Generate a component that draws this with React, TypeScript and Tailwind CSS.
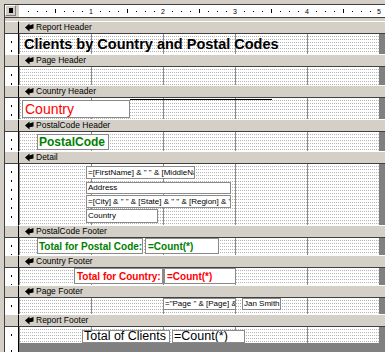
import React from "react";

const GRID =
  "relative w-[360px] shrink-0 bg-[image:linear-gradient(to_right,#8c8c8c_1px,transparent_1px),linear-gradient(to_right,#ffffff_1px,transparent_1px),linear-gradient(to_bottom,#ffffff_2px,#b4b4b4_2px)] bg-[length:72px_100%,2px_3px,2px_3px]";

const LEFT_TICKS =
  "w-[14px] shrink-0 border-r border-black bg-white bg-[image:linear-gradient(to_bottom,transparent_7px,#000000_7px)] bg-[length:1px_9px] bg-[position:6px_0px] bg-repeat-y";

const BOX =
  "absolute bg-white border border-[#8a8a8a] overflow-hidden whitespace-nowrap flex items-center";

function SectionIcon() {
  return (
    <svg width="9" height="9" viewBox="0 0 9 9" className="shrink-0">
      <polygon points="0,4.5 4.5,0.5 4.5,2.5 8.5,1 8.5,5.5 4.5,6.2 4.5,8.5" fill="#000" />
    </svg>
  );
}

function Band({ label }: { label: string }) {
  return (
    <div className="flex h-[13px] shrink-0">
      <div className="w-[14px] shrink-0 border-r border-black bg-[#d4d0c8] border-t border-t-white border-b border-b-[#404040]" />
      <div className="flex-1 bg-[#d4d0c8] border-t border-t-white border-b border-b-[#404040] flex items-center pl-[6px] gap-[2px]">
        <SectionIcon />
        <span className="text-[8.5px] leading-[9px] text-black">{label}</span>
      </div>
    </div>
  );
}

function Row({ h, children }: { h: string; children?: React.ReactNode }) {
  return (
    <div className={"flex shrink-0 " + h}>
      <div className={LEFT_TICKS} />
      <div className={GRID}>{children}</div>
      <div className="flex-1 bg-[#808080]" />
    </div>
  );
}

function Ruler() {
  const items: React.ReactNode[] = [];
  for (let i = 1; i < 41; i++) {
    const x = i * 9;
    if (i % 8 === 0)
      items.push(
        <text key={i} x={x} y={9} fontSize={7} textAnchor="middle" fontFamily="Liberation Sans, sans-serif" fill="#000">
          {i / 8}
        </text>
      );
    else if (i % 4 === 0) items.push(<rect key={i} x={x} y={4} width={1} height={4} fill="#000" />);
    else items.push(<rect key={i} x={x} y={6} width={1} height={1} fill="#000" />);
  }
  return (
    <svg width="366" height="12" className="block">
      {items}
    </svg>
  );
}

export default function App() {
  return (
    <div className="w-[385px] h-[352px] bg-[#d4d0c8] overflow-hidden font-['Liberation_Sans',sans-serif] pt-[4px] pl-[4px] flex flex-col">
      <div className="flex-1 flex flex-col border-l border-t border-[#404040] min-h-0">
        {/* top ruler */}
        <div className="flex h-[13px] shrink-0 border-b border-[#404040]">
          <div className="w-[14px] shrink-0 flex items-start justify-start">
            <div className="w-[11px] h-[11px] border border-[#808080] border-t-white border-l-white bg-[#d4d0c8] flex items-center justify-center">
              <div className="w-[4px] h-[5px] bg-black" />
            </div>
          </div>
          <div className="flex-1 bg-white">
            <Ruler />
          </div>
        </div>
        <div className="h-[3px] shrink-0" />

        <Band label="Report Header" />
        <Row h="h-[20px]">
          <div className="absolute left-[5px] top-[1px] text-[14.5px] leading-[18px] font-bold text-black whitespace-nowrap">
            Clients by Country and Postal Codes
          </div>
        </Row>

        <Band label="Page Header" />
        <Row h="h-[18px]" />

        <Band label="Country Header" />
        <Row h="h-[21px]">
          <div className="absolute left-[111px] top-[1px] w-[142px] h-[1px] bg-black" />
          <div className={BOX + " left-[3px] top-[2px] w-[108px] h-[18px] pl-[2px] text-[14px] text-[#ff0000]"}>Country</div>
        </Row>

        <Band label="PostalCode Header" />
        <Row h="h-[19px]">
          <div className={BOX + " left-[18px] top-[2px] w-[72px] h-[16px] pl-[1px] text-[12px] font-bold text-[#008000]"}>PostalCode</div>
        </Row>

        <Band label="Detail" />
        <Row h="h-[61px]">
          <div className={BOX + " left-[67px] top-[2px] w-[109px] h-[13px] pl-[1px] text-[8px] text-black"}>
            =[FirstName] &amp; " " &amp; [MiddleName] &amp; " " &amp; [LastName]
          </div>
          <div className={BOX + " left-[67px] top-[18px] w-[145px] h-[12px] pl-[1px] text-[8px] text-black"}>Address</div>
          <div className={BOX + " left-[67px] top-[31px] w-[145px] h-[13px] pl-[1px] text-[8px] text-black"}>
            =[City] &amp; " " &amp; [State] &amp; " " &amp; [Region] &amp; " " &amp; [PostalCode]
          </div>
          <div className={BOX + " left-[67px] top-[45px] w-[72px] h-[14px] pl-[1px] text-[8px] text-black"}>Country</div>
        </Row>

        <Band label="PostalCode Footer" />
        <Row h="h-[17px]">
          <div className={BOX + " left-[18px] top-[0px] w-[106px] h-[16px] pl-[1px] text-[10px] font-bold text-[#008000]"}>Total for Postal Code:</div>
          <div className={BOX + " left-[126px] top-[0px] w-[74px] h-[16px] pl-[2px] text-[10px] font-bold text-[#008000]"}>=Count(*)</div>
        </Row>

        <Band label="Country Footer" />
        <Row h="h-[17px]">
          <div className={BOX + " left-[55px] top-[0px] w-[89px] h-[16px] pl-[2px] text-[10px] font-bold text-[#ff0000]"}>Total for Country:</div>
          <div className={BOX + " left-[145px] top-[0px] w-[72px] h-[16px] pl-[2px] text-[10px] font-bold text-[#ff0000]"}>=Count(*)</div>
        </Row>

        <Band label="Page Footer" />
        <Row h="h-[16px]">
          <div className={BOX + " left-[144px] top-[0px] w-[73px] h-[12px] pl-[1px] text-[8px] text-black"}>
            ="Page " &amp; [Page] &amp; " of " &amp; [Pages]
          </div>
          <div className={BOX + " left-[223px] top-[0px] w-[39px] h-[12px] pl-[1px] text-[8px] text-black"}>Jan Smith</div>
        </Row>

        <Band label="Report Footer" />
        <Row h="h-[16px]">
          <div className={BOX + " left-[63px] top-[3px] w-[88px] h-[13px] pl-[1px] text-[12.5px] text-black"}>Total of Clients</div>
          <div className={BOX + " left-[153px] top-[3px] w-[73px] h-[13px] pl-[1px] text-[12.5px] text-black"}>=Count(*)</div>
        </Row>

        <div className="flex-1 flex min-h-0">
          <div className={LEFT_TICKS} />
          <div className="flex-1 bg-[#808080]" />
        </div>
      </div>
    </div>
  );
}
